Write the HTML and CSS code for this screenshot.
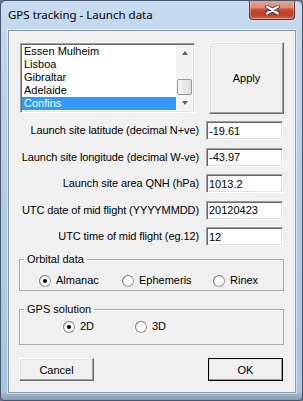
FILE: index.html
```html
<!DOCTYPE html>
<html lang="en">
<head>
    <meta charset="UTF-8">
    <title>GPS tracking - Launch data</title>
    <link rel="stylesheet" href="styles.css">
</head>
<body>
    <div class="window">
        <div class="titlebar">
            <span class="title">GPS tracking - Launch data</span>
            <button class="close" aria-label="Close">
                <svg width="15" height="10" viewBox="0 0 15 10">
                    <path d="M2 1.5 L13 8.5 M13 1.5 L2 8.5" stroke="#3b3f46" stroke-width="4" stroke-linecap="round"/>
                    <path d="M2 1.5 L13 8.5 M13 1.5 L2 8.5" stroke="#fff" stroke-width="2.2" stroke-linecap="round"/>
                </svg>
            </button>
        </div>

        <div class="client">
            <div class="top">
                <div class="listbox">
                    <ul class="items">
                        <li>Essen Mulheim</li>
                        <li>Lisboa</li>
                        <li>Gibraltar</li>
                        <li>Adelaide</li>
                        <li class="selected">Confins</li>
                    </ul>
                    <div class="scrollbar">
                        <span class="arrow up"></span>
                        <span class="track"><span class="thumb"></span></span>
                        <span class="arrow down"></span>
                    </div>
                </div>
                <button class="btn apply">Apply</button>
            </div>

            <div class="fields">
                <label for="lat">Launch site latitude (decimal N+ve)</label>
                <input id="lat" type="text" value="-19.61">
                <label for="lon">Launch site longitude (decimal W-ve)</label>
                <input id="lon" type="text" value="-43.97">
                <label for="qnh">Launch site area QNH (hPa)</label>
                <input id="qnh" type="text" value="1013.2">
                <label for="date">UTC date of mid flight (YYYYMMDD)</label>
                <input id="date" type="text" value="20120423">
                <label for="time">UTC time of mid flight (eg.12)</label>
                <input id="time" type="text" value="12">
            </div>

            <fieldset class="group orbital">
                <legend>Orbital data</legend>
                <div class="radios">
                    <span class="radio"><span class="dot checked"></span>Almanac</span>
                    <span class="radio"><span class="dot"></span>Ephemeris</span>
                    <span class="radio"><span class="dot"></span>Rinex</span>
                </div>
            </fieldset>

            <fieldset class="group solution">
                <legend>GPS solution</legend>
                <div class="radios">
                    <span class="radio"><span class="dot checked"></span>2D</span>
                    <span class="radio"><span class="dot"></span>3D</span>
                </div>
            </fieldset>

            <div class="actions">
                <button class="btn">Cancel</button>
                <button class="btn default">OK</button>
            </div>
        </div>
    </div>
</body>
</html>
```

FILE: styles.css
```css
* { box-sizing: border-box; }
body { margin: 0; width: 303px; height: 401px; background: #6b7886; font-family: "Liberation Sans", Arial, sans-serif; font-size: 11px; color: #000; }

/* window frame */
.window { width: 303px; height: 401px; border: 1px solid #46576c; border-radius: 6px 6px 4px 4px; display: flex; flex-direction: column; overflow: hidden;
    background: linear-gradient(to bottom, #c9dcf1 0, #c2d7ee 30px, #b3cbe7 200px, #a9c3e2 390px, #8d9aa8 100%); }
.titlebar { height: 29px; flex: none; display: flex; justify-content: space-between; align-items: flex-start; }
.title { margin: 6px 0 0 7px; font-family: "Noto Sans", sans-serif; font-size: 11.5px; line-height: 16px; color: #000; }
.close { width: 46px; height: 20px; margin: -1px 7px 0 0; padding: 0; border: 1px solid #6e2d25; border-top: none; border-radius: 0 0 4px 4px; display: flex; align-items: center; justify-content: center;
    background: linear-gradient(to bottom, #e8a899 0, #d98a78 40%, #c5452f 52%, #c13c27 80%, #d6684c 100%); box-shadow: inset 0 0 0 1px rgba(255,255,255,.35); }

.client { flex: 1; margin: 0 6px 7px 7px; border: 1px solid #8497ae; background: #f0f0f0; padding: 11px 11px 0 10px; box-shadow: 0 0 0 1px rgba(255,255,255,.5); }

/* list + apply */
.top { display: flex; align-items: flex-start; }
.listbox { width: 175px; height: 70px; margin: 1px 0 0 1px; display: flex; background: #fff;
    border: 1px solid; border-color: #a0a0a0 #fff #fff #a0a0a0; box-shadow: inset 1px 1px 0 #696969, inset -1px -1px 0 #e3e3e3; padding: 1px; }
.items { list-style: none; margin: 0; padding: 0; flex: 1; }
.items li { height: 13px; line-height: 13px; padding-left: 2px; white-space: nowrap; }
.items li.selected { background: #3399ff; color: #fff; }
.scrollbar { width: 17px; display: flex; flex-direction: column; background: #f3f3f3; }
.arrow { height: 17px; display: flex; align-items: center; justify-content: center; }
.arrow::before { content: ""; border-left: 3.5px solid transparent; border-right: 3.5px solid transparent; }
.arrow.up::before { border-bottom: 4px solid #5d5d5d; }
.arrow.down::before { border-top: 4px solid #5d5d5d; }
.track { flex: 1; padding-top: 17px; }
.thumb { display: block; height: 16px; margin: 0 1px; border: 1px solid #9a9a9a; border-radius: 2px; background: linear-gradient(to right, #f4f4f4, #dedede); }

.btn { height: 23px; width: 75px; padding: 0; font: inherit; color: #000; background: #f0f0f0;
    border: 1px solid; border-color: #fff #696969 #696969 #fff; box-shadow: inset -1px -1px 0 #a0a0a0, inset 1px 1px 0 #e3e3e3; }
.apply { width: 75px; height: 72px; margin-left: 14px; }
.btn.default { outline: 1px solid #000; outline-offset: -1px; border-color: #fff #404040 #404040 #fff; }

/* numeric fields */
.fields { display: grid; grid-template-columns: 1fr 77px; grid-auto-rows: 19px; column-gap: 7px; row-gap: 7.5px; margin: 7px 1px 0 0; }
.fields label { text-align: right; line-height: 19px; white-space: nowrap; letter-spacing: -0.1px; }
.fields input { width: 77px; height: 19px; padding: 0 2px; font: inherit; background: #fff;
    border: 1px solid; border-color: #a0a0a0 #fff #fff #a0a0a0; box-shadow: inset 1px 1px 0 #696969, inset -1px -1px 0 #e3e3e3; outline: none; }

/* group boxes */
.group { margin: 7px 0 0; padding: 0; border: 1px solid #a9a9a9; box-shadow: inset 1px 1px 0 #fff; }
.group legend { margin-left: 4px; padding: 0 3px; line-height: 13px; }
.radios { display: grid; line-height: 13px; }
.orbital .radios { grid-template-columns: 83px 91px auto; padding: 8px 0 3px 19px; }
.solution { margin-top: 12px; }
.solution .radios { grid-template-columns: 72px auto; padding: 4px 0 11px 43px; }
.radio { display: flex; align-items: center; gap: 5px; white-space: nowrap; }
.dot { width: 12px; height: 12px; border-radius: 50%; flex: none; border: 1px solid #9a9a9a; border-top-color: #7a7a7a; border-left-color: #7a7a7a;
    background: radial-gradient(circle at 60% 60%, #fff 40%, #e6e6e6 100%); display: flex; align-items: center; justify-content: center; }
.dot.checked::after { content: ""; width: 4px; height: 4px; border-radius: 50%; background: #000; }

.actions { display: flex; justify-content: space-between; margin: 13px 1px 0 0; }
```
